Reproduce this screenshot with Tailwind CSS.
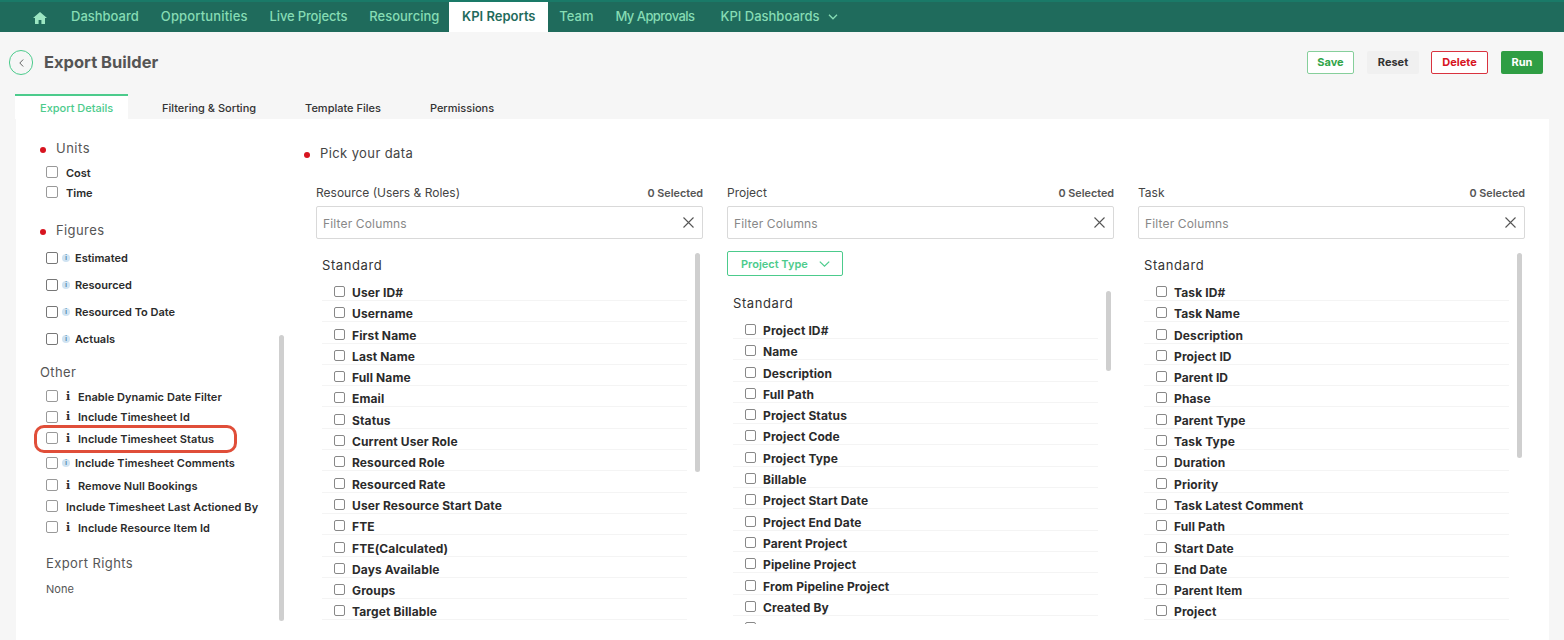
<!DOCTYPE html>
<html lang="en">
<head>
  <meta charset="UTF-8"/>
  <title>Export Builder</title>
  <script src="https://cdn.jsdelivr.net/npm/@tailwindcss/browser@4"></script>
</head>
<body class="bg-[#f6f6f6] h-[640px] overflow-hidden font-['Inter',sans-serif] text-[#2b2b2b]">

  <!-- Top nav -->
  <nav class="h-[32px] bg-[#1f6b5c] border-t-2 border-[#1a7a68] flex items-stretch pl-[33px] text-[13px] font-medium text-[#86dcb4]">
    <div class="w-[27px] flex items-center">
      <svg class="w-[14px] h-[12px] mt-[1px]" viewBox="0 0 14 12" fill="#9be6c2"><path d="M7 0 0 6h2v6h3.6V8h2.8v4H12V6h2z"/></svg>
    </div>
    <a class="px-[11px] flex items-center">Dashboard</a>
    <a class="px-[11px] flex items-center tracking-[0.15px]">Opportunities</a>
    <a class="px-[11px] flex items-center tracking-[-0.15px]">Live Projects</a>
    <a class="px-[11px] flex items-center">Resourcing</a>
    <a class="ml-[-1px] w-[99px] flex items-center justify-center bg-white text-[#1f6b5c] font-semibold">KPI Reports</a>
    <a class="px-[11px] flex items-center">Team</a>
    <a class="px-[11px] flex items-center tracking-[-0.55px]">My Approvals</a>
    <a class="px-[11px] flex items-center gap-[8px] ml-[4px]">KPI Dashboards
      <svg class="w-[10px] h-[6px]" viewBox="0 0 10 6" fill="none" stroke="#86dcb4" stroke-width="1.3"><path d="m1 .8 4 4 4-4"/></svg>
    </a>
  </nav>

  <!-- Title bar -->
  <div class="h-[62px] relative flex items-start pl-[9px] pr-[21px] pt-[18px]">
    <div class="w-[24px] h-[25px] rounded-[12px] border border-[#4ccb8c] flex items-center justify-center">
      <svg class="w-[5px] h-[8px]" viewBox="0 0 5 8" fill="none" stroke="#555" stroke-width="0.9"><path d="M4.2.5.8 4l3.4 3.500"/></svg>
    </div>
    <h1 class="ml-[11px] mt-[2px] text-[16.5px] leading-[20px] font-bold text-[#555]">Export Builder</h1>
    <div class="ml-auto mt-[1px] flex text-[11px] font-bold">
      <button class="w-[47px] h-[23px] rounded-[2px] bg-white border border-[#86cf9b] text-[#32a54a]">Save</button>
      <button class="ml-[13px] w-[52px] h-[23px] rounded-[2px] bg-[#f0f0f0] text-[#333]">Reset</button>
      <button class="ml-[12px] w-[57px] h-[23px] rounded-[2px] bg-white border border-[#d9333f] text-[#d7141f]">Delete</button>
      <button class="ml-[13px] w-[42px] h-[23px] rounded-[2px] bg-[#2f9e44] text-white">Run</button>
    </div>
  </div>

  <!-- Tabs -->
  <div class="ml-[15px] h-[25px] flex text-[11px] font-medium text-[#333]">
    <div class="w-[113px] bg-white border-t-2 border-[#4ccb8c] text-[#4ccb8c] flex items-center pl-[25px] pt-[1px]">Export Details</div>
    <div class="ml-[10px] pl-[24px] pr-[25px] pt-[3px] flex items-center">Filtering &amp; Sorting</div>
    <div class="pl-[24px] pr-[25px] pt-[3px] flex items-center">Template Files</div>
    <div class="pl-[24px] pr-[25px] pt-[3px] flex items-center">Permissions</div>
  </div>

  <!-- Panel -->
  <main class="ml-[16px] mr-[15px] h-[521px] bg-white flex">

    <!-- Left options -->
    <aside class="relative w-[288px] shrink-0 text-[11px] font-semibold">
      <h3 class="mt-[20px] ml-[24px] h-[18px] pt-[2px] flex items-center text-[13px] font-normal tracking-[0.5px] text-[#555]"><span class="w-[6px] h-[6px] mt-[1px] mr-[10px] rounded-full bg-[#d7141f]"></span>Units</h3>
      <div class="mt-[6px] ml-[30px]">
        <label class="h-[20px] flex items-center"><input type="checkbox" class="w-[12px] h-[12px] mb-[2px] mr-[8px] appearance-none bg-white border border-[#999] rounded-[2px]"/>Cost</label>
        <label class="h-[21px] flex items-center"><input type="checkbox" class="w-[12px] h-[12px] mb-[3px] mr-[8px] appearance-none bg-white border border-[#999] rounded-[2px]"/>Time</label>
      </div>

      <h3 class="mt-[17px] ml-[24px] h-[18px] pt-[2px] flex items-center text-[13px] font-normal tracking-[0.4px] text-[#555]"><span class="w-[6px] h-[6px] mt-[1px] mr-[10px] rounded-full bg-[#d7141f]"></span>Figures</h3>
      <div class="mt-[5.5px] ml-[30px]">
        <label class="h-[27px] flex items-center"><input type="checkbox" class="w-[12px] h-[12px] mb-[1px] mr-[4px] appearance-none bg-white border border-[#777] rounded-[2px]"/><span class="w-[8px] h-[8px] mb-[1px] mr-[5px] rounded-full bg-[#cfe3f2] text-[#4a7fa8] text-[6px] leading-[8px] text-center font-bold">i</span>Estimated</label>
        <label class="h-[27px] flex items-center"><input type="checkbox" class="w-[12px] h-[12px] mb-[1px] mr-[4px] appearance-none bg-white border border-[#777] rounded-[2px]"/><span class="w-[8px] h-[8px] mb-[1px] mr-[5px] rounded-full bg-[#cfe3f2] text-[#4a7fa8] text-[6px] leading-[8px] text-center font-bold">i</span>Resourced</label>
        <label class="h-[27px] flex items-center"><input type="checkbox" class="w-[12px] h-[12px] mb-[1px] mr-[4px] appearance-none bg-white border border-[#777] rounded-[2px]"/><span class="w-[8px] h-[8px] mb-[1px] mr-[5px] rounded-full bg-[#cfe3f2] text-[#4a7fa8] text-[6px] leading-[8px] text-center font-bold">i</span>Resourced To Date</label>
        <label class="h-[27px] flex items-center"><input type="checkbox" class="w-[12px] h-[12px] mb-[1px] mr-[4px] appearance-none bg-white border border-[#777] rounded-[2px]"/><span class="w-[8px] h-[8px] mb-[1px] mr-[5px] rounded-full bg-[#cfe3f2] text-[#4a7fa8] text-[6px] leading-[8px] text-center font-bold">i</span>Actuals</label>
      </div>

      <h3 class="mt-[10.5px] ml-[24px] h-[18px] pt-[2px] flex items-center text-[13px] font-normal tracking-[0.4px] text-[#555]">Other</h3>
      <div class="mt-[6px] ml-[30px] tracking-[0.05px]">
        <label class="h-[20px] flex items-center"><input type="checkbox" class="w-[12px] h-[12px] mb-[2px] mr-[6px] appearance-none bg-white border border-[#999] rounded-[2px]"/><span class="w-[8px] mr-[6px] text-center font-bold font-['DejaVu_Serif',serif] text-[11px]">i</span>Enable Dynamic Date Filter</label>
        <label class="h-[21px] flex items-center"><input type="checkbox" class="w-[12px] h-[12px] mb-[2px] mr-[6px] appearance-none bg-white border border-[#999] rounded-[2px]"/><span class="w-[8px] mr-[6px] text-center font-bold font-['DejaVu_Serif',serif] text-[11px]">i</span>Include Timesheet Id</label>
        <label class="h-[22px] flex items-center"><input type="checkbox" class="w-[12px] h-[12px] mb-[2px] mr-[6px] appearance-none bg-white border border-[#999] rounded-[2px]"/><span class="w-[8px] mr-[6px] text-center font-bold font-['DejaVu_Serif',serif] text-[11px]">i</span>Include Timesheet Status</label>
        <label class="h-[26px] flex items-center"><input type="checkbox" class="w-[12px] h-[12px] mb-[1px] mr-[4px] appearance-none bg-white border border-[#999] rounded-[2px]"/><span class="w-[8px] h-[8px] mb-[1px] mr-[5px] rounded-full bg-[#cfe3f2] text-[#4a7fa8] text-[6px] leading-[8px] text-center font-bold">i</span>Include Timesheet Comments</label>
        <label class="h-[20px] flex items-center"><input type="checkbox" class="w-[12px] h-[12px] mb-[2px] mr-[6px] appearance-none bg-white border border-[#999] rounded-[2px]"/><span class="w-[8px] mr-[6px] text-center font-bold font-['DejaVu_Serif',serif] text-[11px]">i</span>Remove Null Bookings</label>
        <label class="h-[22px] flex items-center whitespace-nowrap"><input type="checkbox" class="w-[12px] h-[12px] mb-[2px] mr-[8px] appearance-none bg-white border border-[#999] rounded-[2px]"/>Include Timesheet Last Actioned By</label>
        <label class="h-[20px] flex items-center"><input type="checkbox" class="w-[12px] h-[12px] mb-[2px] mr-[6px] appearance-none bg-white border border-[#999] rounded-[2px]"/><span class="w-[8px] mr-[6px] text-center font-bold font-['DejaVu_Serif',serif] text-[11px]">i</span>Include Resource Item Id</label>
      </div>

      <h3 class="mt-[16px] ml-[30px] h-[18px] pt-[2px] flex items-center text-[13px] font-normal tracking-[0.4px] text-[#555]">Export Rights</h3>
      <p class="mt-[8px] ml-[30px] h-[18px] flex items-center font-normal text-[#555]">None</p>

      <!-- red annotation + scrollbar sit over the list -->
      <div class="absolute left-[18px] top-[306px] w-[203px] h-[28px] rounded-[10px] border-[3px] border-[#e04e39]"></div>
      <div class="absolute left-[263px] top-[216px] w-[5px] h-[286px] rounded-full bg-[#cfcfcf]"></div>
    </aside>

    <!-- Pick your data -->
    <section class="h-[505px] flex-1 min-w-0 flex flex-col">
      <h3 class="mt-[24px] h-[20px] flex items-center text-[13px] tracking-[0.4px] text-[#444]"><span class="w-[6px] h-[6px] mt-[3px] mr-[10px] rounded-full bg-[#d7141f]"></span><span class="mt-[1px]">Pick your data</span></h3>
      <div class="mt-[19px] ml-[12px] flex-1 min-h-0 flex gap-[24px]">

        <div class="w-[387px] flex flex-col min-h-0">
          <div class="h-[21px] flex items-center justify-between"><span class="text-[12px] text-[#444]">Resource (Users &amp; Roles)</span><span class="mt-[3px] text-[10.8px] font-semibold text-[#555]">0 Selected</span></div>
          <div class="mt-[3px] h-[33px] shrink-0 rounded-[2px] border border-[#d9d9d9] flex items-center justify-between pl-[6px] pr-[8px] text-[12px] tracking-[0.15px] text-[#888]"><span class="mt-[2px]">Filter Columns</span>
            <svg class="w-[11px] h-[11px]" viewBox="0 0 11 11" fill="none" stroke="#555" stroke-width="1.1"><path d="m.5.5 10 10m0-10-10 10"/></svg>
          </div>
          <div data-list="resource" class="relative mt-[14px] flex-1 min-h-0 overflow-hidden"><div class="absolute right-[3px] top-0 w-[5px] h-[219px] rounded-full bg-[#cfcfcf]"></div></div>
        </div>

        <div class="w-[387px] flex flex-col min-h-0">
          <div class="h-[21px] flex items-center justify-between"><span class="text-[12px] text-[#444]">Project</span><span class="mt-[3px] text-[10.8px] font-semibold text-[#555]">0 Selected</span></div>
          <div class="mt-[3px] h-[33px] shrink-0 rounded-[2px] border border-[#d9d9d9] flex items-center justify-between pl-[6px] pr-[8px] text-[12px] tracking-[0.15px] text-[#888]"><span class="mt-[2px]">Filter Columns</span>
            <svg class="w-[11px] h-[11px]" viewBox="0 0 11 11" fill="none" stroke="#555" stroke-width="1.1"><path d="m.5.5 10 10m0-10-10 10"/></svg>
          </div>
          <button class="mt-[12px] w-[116px] h-[25px] shrink-0 rounded-[2px] border border-[#4ccb8c] flex items-center pl-[13px] gap-[11px] text-[11px] font-semibold text-[#4ccb8c]"><span class="mt-[1px]">Project Type</span>
            <svg class="w-[11px] h-[6px]" viewBox="0 0 11 6" fill="none" stroke="#4ccb8c" stroke-width="1.2"><path d="m.8.6 4.700 4.500L10.200.6"/></svg>
          </button>
          <div data-list="project" class="relative mt-[15px] flex-1 min-h-0 overflow-hidden"><div class="absolute right-[3px] top-0 w-[5px] h-[80px] rounded-full bg-[#cfcfcf]"></div></div>
        </div>

        <div class="w-[387px] flex flex-col min-h-0">
          <div class="h-[21px] flex items-center justify-between"><span class="text-[12px] text-[#444]">Task</span><span class="mt-[3px] text-[10.8px] font-semibold text-[#555]">0 Selected</span></div>
          <div class="mt-[3px] h-[33px] shrink-0 rounded-[2px] border border-[#d9d9d9] flex items-center justify-between pl-[6px] pr-[8px] text-[12px] tracking-[0.15px] text-[#888]"><span class="mt-[2px]">Filter Columns</span>
            <svg class="w-[11px] h-[11px]" viewBox="0 0 11 11" fill="none" stroke="#555" stroke-width="1.1"><path d="m.5.5 10 10m0-10-10 10"/></svg>
          </div>
          <div data-list="task" class="relative mt-[14px] flex-1 min-h-0 overflow-hidden"><div class="absolute right-[3px] top-0 w-[5px] h-[205px] rounded-full bg-[#cfcfcf]"></div></div>
        </div>

      </div>
    </section>
  </main>

  <script>
    const columns = {
      resource: ['User ID#','Username','First Name','Last Name','Full Name','Email','Status','Current User Role','Resourced Role','Resourced Rate','User Resource Start Date','FTE','FTE(Calculated)','Days Available','Groups','Target Billable'],
      project: ['Project ID#','Name','Description','Full Path','Project Status','Project Code','Project Type','Billable','Project Start Date','Project End Date','Parent Project','Pipeline Project','From Pipeline Project','Created By',''],
      task: ['Task ID#','Task Name','Description','Project ID','Parent ID','Phase','Parent Type','Task Type','Duration','Priority','Task Latest Comment','Full Path','Start Date','End Date','Parent Item','Project']
    };

    document.querySelectorAll('[data-list]').forEach(list => {
      let html = '<div class="pt-[4px] pl-[6px] h-[20px] text-[13px] leading-[16px] tracking-[0.6px] text-[#333]">Standard</div><div class="h-[6.67px]"></div>';
      columns[list.dataset.list].forEach(name => {
        html += `<label class="ml-[6px] mr-[16px] h-[21.3px] flex items-end border-b border-[#f4f4f4] pl-[12px] text-[12px] leading-[14px] font-bold tracking-[0.12px] text-[#2b2b2b]">
          <input type="checkbox" class="w-[11px] h-[11px] mb-[3px] mr-[7px] appearance-none bg-white border border-[#888] rounded-[2px]"/>${name}</label>`;
      });
      list.insertAdjacentHTML('beforeend', html);
    });
  </script>
</body>
</html>
